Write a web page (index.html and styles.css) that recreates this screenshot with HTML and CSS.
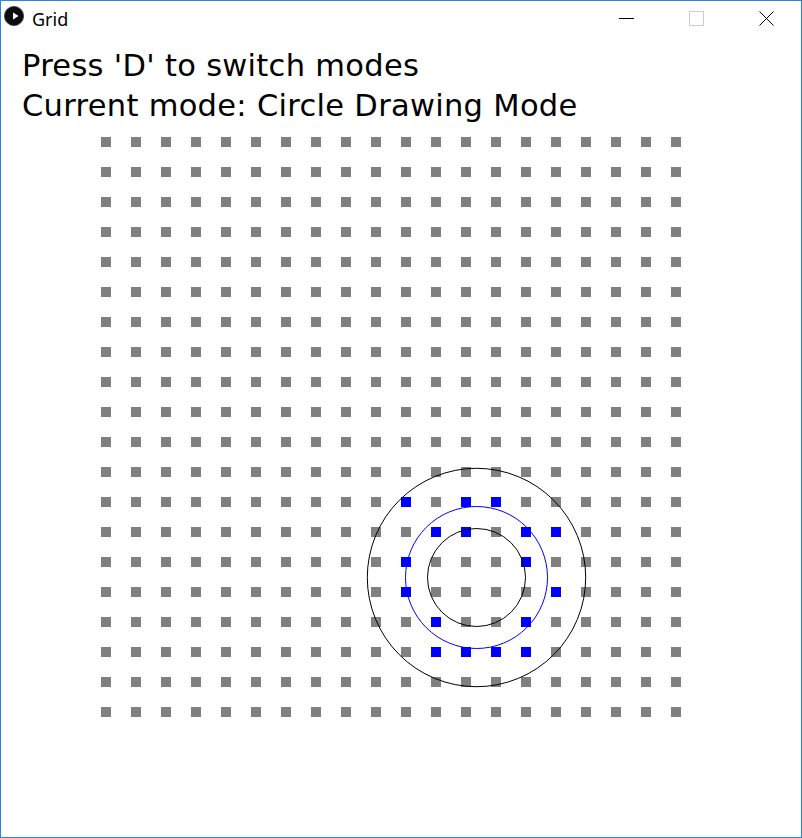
FILE: index.html
```html
<!DOCTYPE html>
<html lang="en">
<head>
<meta charset="utf-8">
<title>Grid</title>
<link rel="stylesheet" href="styles.css">
</head>
<body>
<div class="window">
  <header class="titlebar">
    <svg class="app-icon" width="20" height="20" viewBox="0 0 20 20">
      <circle cx="10" cy="10" r="9.6" fill="#0d0d0d" stroke="#3a3a3a" stroke-width="0.8"/>
      <polygon points="9,6.6 14.6,10 9,13.4" fill="#fff"/>
    </svg>
    <span class="title">Grid</span>
    <div class="controls">
      <div class="ctl"><svg width="15" height="15" viewBox="0 0 15 15"><line x1="0" y1="7.5" x2="15" y2="7.5" stroke="#000" stroke-width="1"/></svg></div>
      <div class="ctl"><svg width="15" height="15" viewBox="0 0 15 15"><rect x="0.5" y="0.5" width="14" height="14" fill="none" stroke="#cccccc" stroke-width="1"/></svg></div>
      <div class="ctl"><svg width="15" height="15" viewBox="0 0 15 15"><path d="M0.5 0.5 L14.5 14.5 M14.5 0.5 L0.5 14.5" stroke="#000" stroke-width="1"/></svg></div>
    </div>
  </header>
  <main class="canvas">
    <div class="info">
      <p>Press 'D' to switch modes</p>
      <p>Current mode: Circle Drawing Mode</p>
    </div>
    <div class="board">
      <div class="grid">
        <i></i><i></i><i></i><i></i><i></i><i></i><i></i><i></i><i></i><i></i><i></i><i></i><i></i><i></i><i></i><i></i><i></i><i></i><i></i><i></i>
        <i></i><i></i><i></i><i></i><i></i><i></i><i></i><i></i><i></i><i></i><i></i><i></i><i></i><i></i><i></i><i></i><i></i><i></i><i></i><i></i>
        <i></i><i></i><i></i><i></i><i></i><i></i><i></i><i></i><i></i><i></i><i></i><i></i><i></i><i></i><i></i><i></i><i></i><i></i><i></i><i></i>
        <i></i><i></i><i></i><i></i><i></i><i></i><i></i><i></i><i></i><i></i><i></i><i></i><i></i><i></i><i></i><i></i><i></i><i></i><i></i><i></i>
        <i></i><i></i><i></i><i></i><i></i><i></i><i></i><i></i><i></i><i></i><i></i><i></i><i></i><i></i><i></i><i></i><i></i><i></i><i></i><i></i>
        <i></i><i></i><i></i><i></i><i></i><i></i><i></i><i></i><i></i><i></i><i></i><i></i><i></i><i></i><i></i><i></i><i></i><i></i><i></i><i></i>
        <i></i><i></i><i></i><i></i><i></i><i></i><i></i><i></i><i></i><i></i><i></i><i></i><i></i><i></i><i></i><i></i><i></i><i></i><i></i><i></i>
        <i></i><i></i><i></i><i></i><i></i><i></i><i></i><i></i><i></i><i></i><i></i><i></i><i></i><i></i><i></i><i></i><i></i><i></i><i></i><i></i>
        <i></i><i></i><i></i><i></i><i></i><i></i><i></i><i></i><i></i><i></i><i></i><i></i><i></i><i></i><i></i><i></i><i></i><i></i><i></i><i></i>
        <i></i><i></i><i></i><i></i><i></i><i></i><i></i><i></i><i></i><i></i><i></i><i></i><i></i><i></i><i></i><i></i><i></i><i></i><i></i><i></i>
        <i></i><i></i><i></i><i></i><i></i><i></i><i></i><i></i><i></i><i></i><i></i><i></i><i></i><i></i><i></i><i></i><i></i><i></i><i></i><i></i>
        <i></i><i></i><i></i><i></i><i></i><i></i><i></i><i></i><i></i><i></i><i></i><i></i><i></i><i></i><i></i><i></i><i></i><i></i><i></i><i></i>
        <i></i><i></i><i></i><i></i><i></i><i></i><i></i><i></i><i></i><i></i><i class="on"></i><i></i><i class="on"></i><i class="on"></i><i></i><i></i><i></i><i></i><i></i><i></i>
        <i></i><i></i><i></i><i></i><i></i><i></i><i></i><i></i><i></i><i></i><i></i><i class="on"></i><i class="on"></i><i></i><i class="on"></i><i class="on"></i><i></i><i></i><i></i><i></i>
        <i></i><i></i><i></i><i></i><i></i><i></i><i></i><i></i><i></i><i></i><i class="on"></i><i></i><i></i><i></i><i class="on"></i><i></i><i></i><i></i><i></i><i></i>
        <i></i><i></i><i></i><i></i><i></i><i></i><i></i><i></i><i></i><i></i><i class="on"></i><i></i><i></i><i></i><i></i><i class="on"></i><i></i><i></i><i></i><i></i>
        <i></i><i></i><i></i><i></i><i></i><i></i><i></i><i></i><i></i><i></i><i></i><i class="on"></i><i></i><i></i><i class="on"></i><i></i><i></i><i></i><i></i><i></i>
        <i></i><i></i><i></i><i></i><i></i><i></i><i></i><i></i><i></i><i></i><i></i><i class="on"></i><i class="on"></i><i class="on"></i><i class="on"></i><i></i><i></i><i></i><i></i><i></i>
        <i></i><i></i><i></i><i></i><i></i><i></i><i></i><i></i><i></i><i></i><i></i><i></i><i></i><i></i><i></i><i></i><i></i><i></i><i></i><i></i>
        <i></i><i></i><i></i><i></i><i></i><i></i><i></i><i></i><i></i><i></i><i></i><i></i><i></i><i></i><i></i><i></i><i></i><i></i><i></i><i></i>
      </div>
      <svg class="rings" width="580" height="580" viewBox="0 0 580 580">
        <circle cx="375.5" cy="440.5" r="109.2" fill="none" stroke="#000" stroke-width="1"/>
        <circle cx="375.5" cy="440.5" r="71" fill="none" stroke="#0000ff" stroke-width="1"/>
        <circle cx="375.5" cy="440.5" r="49" fill="none" stroke="#000" stroke-width="1"/>
      </svg>
    </div>
  </main>
</div>
</body>
</html>
```

FILE: styles.css
```css
* { box-sizing: border-box; }
html, body { margin: 0; padding: 0; background: #fff; }

.window {
  width: 802px;
  height: 838px;
  border: 1px solid #2a86d6;
  background: #fff;
  display: flex;
  flex-direction: column;
  overflow: hidden;
}

.titlebar {
  height: 35px;
  display: flex;
  align-items: center;
  padding-left: 3px;
  flex: none;
}

.app-icon {
  align-self: flex-start;
  margin-top: 5px;
  flex: none;
}

.title {
  margin-left: 8px;
  font-family: "Noto Sans", "Open Sans", sans-serif;
  font-size: 18px;
  color: #000;
}

.controls {
  margin-left: auto;
  display: flex;
  height: 100%;
}

.ctl {
  width: 70px;
  height: 100%;
  display: flex;
  align-items: center;
  justify-content: center;
}

.ctl svg { display: block; }

.canvas {
  flex: 1;
  padding-top: 10px;
}

.info {
  padding-left: 21px;
  font-family: "DejaVu Sans", sans-serif;
  font-size: 30.5px;
  letter-spacing: 0.3px;
  line-height: 40px;
  color: #000;
}

.info p { margin: 0; white-space: nowrap; }

.board {
  position: relative;
  width: 580px;
  height: 580px;
  margin-top: 11px;
  margin-left: 100px;
}

.grid {
  display: grid;
  grid-template-columns: repeat(20, 10px);
  grid-auto-rows: 10px;
  gap: 20px;
}

.grid i {
  display: block;
  width: 10px;
  height: 10px;
  background: #808080;
}

.grid i.on { background: #0000ff; }

.rings {
  position: absolute;
  left: 0;
  top: 0;
  overflow: visible;
}
```
